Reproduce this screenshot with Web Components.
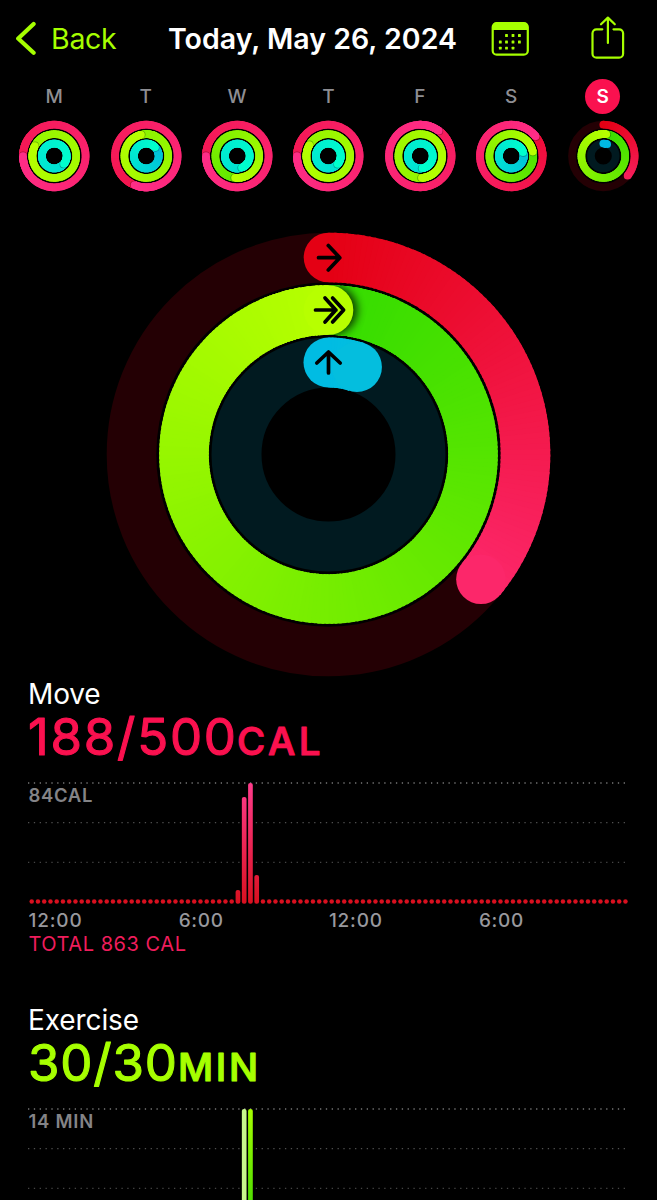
<!DOCTYPE html>
<html lang="en">
<head>
<meta charset="utf-8">
<title>Activity</title>
<style>
html,body{margin:0;background:#000}
body{height:1200px;overflow:hidden;font-family:Inter,"Noto Sans",sans-serif;color:#fff}
</style>
</head>
<body>
<activity-page></activity-page>
<script>
// Text whose tracking is adjusted so that it spans a given width.
class FitText extends HTMLElement{
  connectedCallback(){
    const r=this.attachShadow({mode:'open'});
    r.innerHTML='<style>:host{display:block;white-space:nowrap}span{display:inline-block}</style><span><slot></slot></span>';
    const s=r.querySelector('span'),n=this.textContent.trim().length,w=+this.getAttribute('width');
    if(w)s.style.letterSpacing=((w-s.getBoundingClientRect().width)/n).toFixed(3)+'px';
  }
}
const PAL={
  move:{track:'#240004',from:[228,0,20],to:[255,45,135]},
  exercise:{track:'#0b2400',from:[52,220,0],to:[183,255,0]},
  stand:{track:'#011a20',from:[0,184,226],to:[0,255,205]}
};
function ring(cx,cy,r,w,kind,sweep,opt={}){
  const p=PAL[kind],from=opt.from||p.from,to=opt.to||p.to,big=r>60;
  const pt=a=>{const t=a*Math.PI/180;return [cx+r*Math.sin(t),cy-r*Math.cos(t)]};
  const mix=f=>'rgb('+from.map((v,i)=>Math.round(v+(to[i]-v)*f)).join(',')+')';
  const f=n=>n.toFixed(2);
  const step=big?1.5:4,over=120/r,lap=Math.max(0,sweep-360);
  let out=`<circle cx="${cx}" cy="${cy}" r="${r}" fill="none" stroke="${sweep<360?p.track:mix((lap+180)/sweep)}" stroke-width="${sweep<360?w:w-1}"/>`;
  const [sx,sy]=pt(0),[ex,ey]=pt(sweep);
  if(sweep<360)out+=`<circle cx="${f(sx)}" cy="${f(sy)}" r="${w/2}" fill="${mix(0)}"/>`;
  // Each piece runs on under the next one, so that no seam shows.
  const seg=(a0,a1)=>{let s='';for(let a=a0;a<a1;a+=step){
    const b=Math.min(a1,a+step),[x0,y0]=pt(a),[x1,y1]=pt(Math.min(a1,b+over));
    s+=`<path d="M${f(x0)} ${f(y0)}A${r} ${r} 0 0 1 ${f(x1)} ${f(y1)}" fill="none" stroke="${mix((a+b)/2/sweep)}" stroke-width="${w}"/>`;
  }return s};
  out+=seg(lap,sweep);
  if(sweep>=360){
    // The leading cap lies over the previous lap and shades it.
    const extra=big?24:40;
    out+=seg(lap,lap+extra);
    const [hx,hy]=pt(sweep+(big?1.6:1.4*31/r)),id='c'+kind,R=r+w/2,q=r-w/2;
    out+=`<clipPath id="${id}"><path clip-rule="evenodd" d="M${cx-R} ${cy}a${R} ${R} 0 1 0 ${2*R} 0a${R} ${R} 0 1 0 ${-2*R} 0ZM${cx-q} ${cy}a${q} ${q} 0 1 0 ${2*q} 0a${q} ${q} 0 1 0 ${-2*q} 0Z"/></clipPath><g clip-path="url(#${id})"><circle cx="${f(hx)}" cy="${f(hy)}" r="${w/2}" fill="#000" opacity="${big?.75:.3}" style="filter:blur(${big?4:.35}px)"/></g>`;
    out+=seg(sweep-extra,sweep);
  }
  return out+`<circle cx="${f(ex)}" cy="${f(ey)}" r="${w/2}" fill="${mix(1)}"/>`;
}
class NavBar extends HTMLElement{
  connectedCallback(){
    this.attachShadow({mode:'open'}).innerHTML=`<style>
    :host{display:flex;height:78px;align-items:center;font-size:28.5px;line-height:34px}
    .back{display:flex;align-items:center;color:#a6ff00;width:168px;flex:none}
    .back svg{margin-right:15px;flex:none}
    .t{font-weight:600;width:323px;flex:none}
    svg{display:block}.share{margin-left:61.500px}
    g,path{stroke-linecap:round;stroke-linejoin:round}
    </style>
    <div class="back"><svg width="36" height="78" fill="none" stroke="#a6ff00"><path d="M33.600 24 18.200 38.500 33.600 52.800" stroke-width="4.200"/></svg><fit-text width="65.500">Back</fit-text></div>
    <div class="t"><fit-text width="289">Today, May 26, 2024</fit-text></div>
    <svg width="38" height="78"><rect x="1.7" y="23.1" width="35.1" height="31.6" rx="4" fill="none" stroke="#a6ff00" stroke-width="2.2"/><path d="M1.500 30v-3a4.500 4.500 0 0 1 4.500-4.500h26.500a4.500 4.500 0 0 1 4.500 4.500v3z" fill="#a6ff00"/><g fill="#a6ff00">${[[15.5,35.5],[22,35.5],[28.4,35.5],[9.3,42],[15.5,42],[22,42],[28.4,42],[9.3,48.2],[15.5,48.2],[22,48.2]].map(([x,y])=>`<rect x="${x-1.4}" y="${y-1.4}" width="2.8" height="2.8" rx=".5"/>`).join('')}</g></svg>
    <svg class="share" width="36" height="78" fill="none" stroke="#a6ff00" stroke-width="2.2"><path d="M11.300 29.300H5.500a4 4 0 0 0-4 4v20.400a4 4 0 0 0 4 4h22.600a4 4 0 0 0 4-4V33.300a4 4 0 0 0-4-4h-5.600M16.900 43V17.900M10 24.300l6.900-6.700 6.900 6.700"/></svg>`;
  }
}
class DayRings extends HTMLElement{
  connectedCallback(){
    const [m,e,s]=this.getAttribute('sweeps').split(',').map(Number),today=this.hasAttribute('today');
    const o=today?[{to:[245,30,90]},{},{to:[0,184,226]}]:[{from:[236,8,45]},{},{from:[0,180,220]}];
    this.attachShadow({mode:'open'}).innerHTML=`<style>
    :host{display:flex;flex-direction:column;align-items:center;gap:6px;width:91.4px;font-size:19px;font-weight:500;color:#8e8e93}
    .d{width:35.4px;height:35px;line-height:35px;text-align:center;border-radius:50%}
    :host([today]) .d{background:#fa114f;color:#fff;font-weight:600;height:35.4px;margin-bottom:-.4px}
    svg{display:block}</style><div class="d"><slot></slot></div>
    <svg width="72" height="72">${ring(36.3,36,31.3,7.7,'move',m,o[0])+ring(36.3,36,21.9,7.6,'exercise',e,o[1])+ring(36.3,36,12.4,7.7,'stand',s,o[2])}</svg>`;
  }
}
class BigRings extends HTMLElement{
  connectedCallback(){
    this.attachShadow({mode:'open'}).innerHTML=`<style>:host{display:block;height:448px}svg{display:block}</style>
    <svg width="657" height="448">
    ${ring(328.5,224.5,197,49.6,'move',129.3,{to:[252,39,106]})+ring(328.5,224.5,144.5,49.6,'exercise',360)+ring(328.5,224.5,92,50,'stand',18,{from:[0,188,227],to:[4,190,222]})}
    <g fill="none" stroke="#000" stroke-width="3.7" stroke-linecap="round" stroke-linejoin="round">
    <path d="M318.500 27.700h21M328.300 15.500l11.500 12.200-11.500 12.300"/>
    <path d="M315.500 80h20.500M325 68l10.800 12L325 92M332.600 68l11 12-11 12"/>
    <path d="M328.500 143v-21M316.800 133l11.700-11 11.700 11"/></g></svg>`;
  }
}
class ActivityChart extends HTMLElement{
  connectedCallback(){
    const a=n=>this.getAttribute(n),col=a('color'),base=133.8;
    const bars=JSON.parse(a('bars'));
    let dots='';
    for(let i=0;i<96;i++){const x=31.7+i*6.25,b=bars[i];
      dots+=b?`<rect x="${x-2.35}" y="${b[0]}" width="4.7" height="${base-b[0]}" rx="2.1" fill="${b[1]||'url(#g)'}"/>`:`<circle cx="${x}" cy="131.600" r="2.25" fill="${a('dot')}"/>`}
    const lines=[[13,'#777'],[52.7,'#505050'],[92.3,'#454545']].map(([y,c])=>`<path d="M28 ${y}H627" stroke="${c}" stroke-width="1.3" stroke-dasharray="1.3 4.54"/>`).join('');
    this.attachShadow({mode:'open'}).innerHTML=`<style>
    :host{display:block;height:326px}
    .h{padding-left:28px;font-size:28px;line-height:32px;height:32px}
    svg{display:block}
    .v{overflow:visible;font-family:Inter,sans-serif;stroke-linejoin:round;stroke-linecap:round;stroke-width:1.1px}
    .chart{position:relative;height:140px}
    .max{position:absolute;left:28.5px;top:15px;line-height:20px;font-size:18.5px;font-weight:600;color:#848487}
    .axis{display:grid;grid-template-columns:150.200px 150.200px 150px 1fr;padding:1px 0 0 28.5px;font-size:19px;line-height:20px;height:20px;font-weight:500;color:#98989d}
    .total{margin-top:1px;padding-left:28.500px;font-size:20px;line-height:24px;color:#ef1d5c}
    </style>
    <div class="h"><fit-text width="${a('tw')}">${a('label')}</fit-text></div>
    <svg width="657" height="60" class="v" fill="${col}" stroke="${col}">
    <text x="${a('vx')}" y="44.800" font-size="51" font-weight="400" textLength="${a('vw')}">${a('value')}</text>
    <text x="${a('ux')}" y="44.500" font-size="38.500" font-weight="500" textLength="${a('uw')}">${a('unit')}</text></svg>
    <div class="chart"><svg width="657" height="140"><defs><linearGradient id="g" gradientUnits="userSpaceOnUse" x1="0" x2="0" y1="13" y2="134"><stop stop-color="${a('top')}"/><stop offset="1" stop-color="${a('dot')}"/></linearGradient></defs>${lines}${dots}</svg>
    <div class="max"><fit-text width="${a('mw')}">${a('max')}</fit-text></div></div>
    ${a('total')?`<div class="axis"><fit-text width="54">12:00</fit-text><fit-text width="45">6:00</fit-text><fit-text width="54">12:00</fit-text><fit-text width="45">6:00</fit-text></div><div class="total"><fit-text width="158">${a('total')}</fit-text></div>`:''}`;
  }
}
class ActivityPage extends HTMLElement{
  connectedCallback(){
    this.attachShadow({mode:'open'}).innerHTML=`<style>
    :host{display:block;width:657px;height:1200px;overflow:hidden}
    .week{display:flex;padding:1px 0 0 8.600px;height:151px;overflow:hidden}
    day-rings{flex:none}
    activity-chart:last-child{height:196px;overflow:hidden}
    </style>
    <nav-bar></nav-bar>
    <div class="week">
    <day-rings sweeps="630,1377,849">M</day-rings><day-rings sweeps="562,1066,405">T</day-rings><day-rings sweeps="630,546,878">W</day-rings><day-rings sweeps="630,1380,850">T</day-rings><day-rings sweeps="756,1256,890">F</day-rings><day-rings sweeps="411,439,432">S</day-rings><day-rings today sweeps="129,368,18">S</day-rings></div>
    <big-rings></big-rings>
    <activity-chart label="Move" tw="72.500" value="188/500" vx="28" vw="208" unit="CAL" ux="237" uw="83.500" color="#fa114f" max="84CAL" mw="64.500" top="#ff3b8b" dot="#d9101f" total="TOTAL 863 CAL" bars='{"33":[120],"34":[27],"35":[13],"36":[105]}'></activity-chart>
    <activity-chart label="Exercise" tw="111" value="30/30" vx="28" vw="149" unit="MIN" ux="178" uw="80" color="#a6ff00" max="14 MIN" mw="65.500" top="#a6ff00" dot="#35d400" bars='{"34":[13,"#c8f78e"],"35":[13]}'></activity-chart>`;
  }
}
customElements.define('fit-text',FitText);
customElements.define('nav-bar',NavBar);
customElements.define('day-rings',DayRings);
customElements.define('big-rings',BigRings);
customElements.define('activity-chart',ActivityChart);
customElements.define('activity-page',ActivityPage);
</script>
</body>
</html>
